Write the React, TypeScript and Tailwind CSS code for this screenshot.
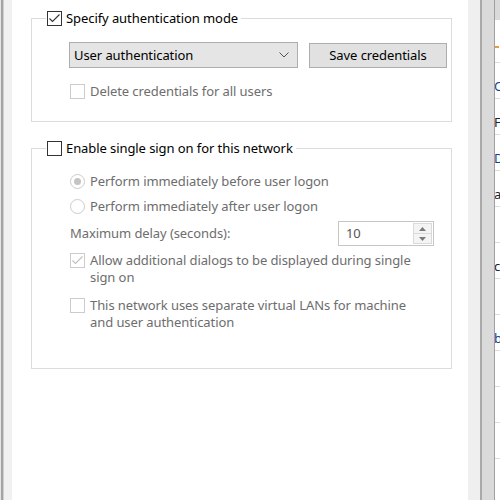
import React from "react";

function Check({ checked = false, disabled = false }: { checked?: boolean; disabled?: boolean }) {
  const border = disabled ? "border-[#cccccc]" : "border-[#333333]";
  return (
    <div className={`w-[15px] h-[15px] shrink-0 border ${border} bg-white flex items-center justify-center`}>
      {checked && (
        <svg width="13" height="13" viewBox="0 0 13 13">
          <polyline
            points="1.5,6.5 4.5,9.5 11.5,2.5"
            fill="none"
            stroke={disabled ? "#bfbfbf" : "#333333"}
            strokeWidth="1.1"
          />
        </svg>
      )}
    </div>
  );
}

function Radio({ selected = false }: { selected?: boolean }) {
  return (
    <div className="w-[15px] h-[15px] shrink-0 rounded-full border border-[#cccccc] bg-white flex items-center justify-center">
      {selected && <div className="w-[7px] h-[7px] rounded-full bg-[#c4c4c4]" />}
    </div>
  );
}

const rows = [
  { t: "Or", c: "text-[#1a3c8c]" },
  { t: "Fo", c: "text-[#222]" },
  { t: "Do", c: "text-[#1a3c8c]" },
  { t: "al", c: "text-[#222]" },
  { t: "", c: "" },
  { t: "ch", c: "text-[#222]" },
  { t: "", c: "" },
  { t: "bl", c: "text-[#1a3c8c]" },
  { t: "", c: "" },
  { t: "", c: "" },
  { t: "", c: "" },
  { t: "", c: "" },
];

export default function App() {
  return (
    <div className="w-[500px] h-[500px] flex bg-white overflow-hidden font-['Noto_Sans',sans-serif] text-[13px] leading-[17px] tracking-[-0.08px] text-black">
      {/* left edge of window */}
      <div className="flex shrink-0">
        <div className="w-[1px] bg-[#e3e3e3]" />
        <div className="w-[2px] bg-[#a3a3a3]" />
        <div className="w-[1px] bg-[#cfcfcf]" />
        <div className="w-[8px] bg-[#f0f0f0]" />
      </div>

      {/* dialog page */}
      <div className="w-[456px] shrink-0 pt-[10px] pl-[19px]">
        <fieldset className="w-[421px] border border-[#dcdcdc] pb-[21px] pl-[37px]">
          <legend className="ml-[-23px] pl-[1px] pr-[3px] h-[17px] flex items-center gap-[4px]">
            <Check checked />
            <span>Specify authentication mode</span>
          </legend>
          <div className="mt-[15px] flex items-center h-[26px]">
            <div className="w-[229px] h-[26px] border border-[#adadad] bg-[#e5e5e5] flex items-center pl-[4px] pr-[8px]">
              <span className="flex-1">User authentication</span>
              <svg width="10" height="6" viewBox="0 0 10 6">
                <polyline points="0.5,0.5 5,5 9.5,0.5" fill="none" stroke="#555" strokeWidth="1" />
              </svg>
            </div>
            <div className="ml-[11px] w-[138px] h-[25px] border border-[#adadad] bg-[#e1e1e1] flex items-center justify-center">
              Save credentials
            </div>
          </div>
          <div className="mt-[15px] pl-[1px] h-[17px] flex items-center gap-[5px] text-[#6d6d6d]">
            <Check disabled />
            <span>Delete credentials for all users</span>
          </div>
        </fieldset>

        <fieldset className="mt-[18px] w-[421px] border border-[#dcdcdc] pb-[37px] pl-[38px]">
          <legend className="ml-[-24px] pl-[1px] pr-[3px] h-[17px] flex items-center gap-[4px]">
            <Check />
            <span>Enable single sign on for this network</span>
          </legend>
          <div className="text-[#6d6d6d]">
            <div className="mt-[16px] h-[17px] flex items-center gap-[5px]">
              <Radio selected />
              <span>Perform immediately before user logon</span>
            </div>
            <div className="mt-[8px] h-[17px] flex items-center gap-[5px]">
              <Radio />
              <span>Perform immediately after user logon</span>
            </div>
            <div className="mt-[6px] h-[25px] flex items-center">
              <span className="w-[268px]">Maximum delay (seconds):</span>
              <div className="w-[96px] h-[25px] border border-[#c6c6c6] bg-white flex">
                <div className="flex-1 pl-[7px] flex items-center text-[#555]">10</div>
                <div className="w-[19px] my-[1px] mr-[1px] flex flex-col border border-[#dadada] bg-[#f4f4f4]">
                  <div className="flex-1 flex items-center justify-center border-b border-[#dadada]">
                    <svg width="7" height="4" viewBox="0 0 7 4">
                      <polygon points="0,4 7,4 3.5,0" fill="#7a7a7a" />
                    </svg>
                  </div>
                  <div className="flex-1 flex items-center justify-center">
                    <svg width="7" height="4" viewBox="0 0 7 4">
                      <polygon points="0,0 7,0 3.5,4" fill="#7a7a7a" />
                    </svg>
                  </div>
                </div>
              </div>
            </div>
            <div className="mt-[6px] flex gap-[5px]">
              <div className="h-[17px] flex items-center">
                <Check checked disabled />
              </div>
              <span>
                Allow additional dialogs to be displayed during single
                <br />
                sign on
              </span>
            </div>
            <div className="mt-[11px] flex gap-[5px]">
              <div className="h-[17px] flex items-center">
                <Check disabled />
              </div>
              <span>
                This network uses separate virtual LANs for machine
                <br />
                and user authentication
              </span>
            </div>
          </div>
        </fieldset>
      </div>

      {/* right edge: dialog frame and background window */}
      <div className="w-[12px] shrink-0 bg-[#efefef]" />
      <div className="w-[2px] shrink-0 bg-[#a9a9a9]" />
      <div className="w-[12px] shrink-0 bg-[#dadada]" />
      <div className="w-[1px] shrink-0 bg-[#a0a0a0]" />
      <div className="flex-1 flex flex-col bg-[#dadada]">
        <div className="h-[20px]" />
        <div className="flex-1 bg-white flex flex-col overflow-hidden">
          <div className="h-[42px] flex items-center">
            <div className="w-[4px] h-[2px] bg-[#e0a040] mt-[12px]" />
          </div>
          {rows.map((r, i) => (
            <div key={i} className="h-[36px] shrink-0 border-t border-[#dcdcdc] flex items-end pb-[3px]">
              <span className={`whitespace-nowrap ml-[-1px] ${r.c}`}>{r.t}</span>
            </div>
          ))}
        </div>
      </div>
    </div>
  );
}
